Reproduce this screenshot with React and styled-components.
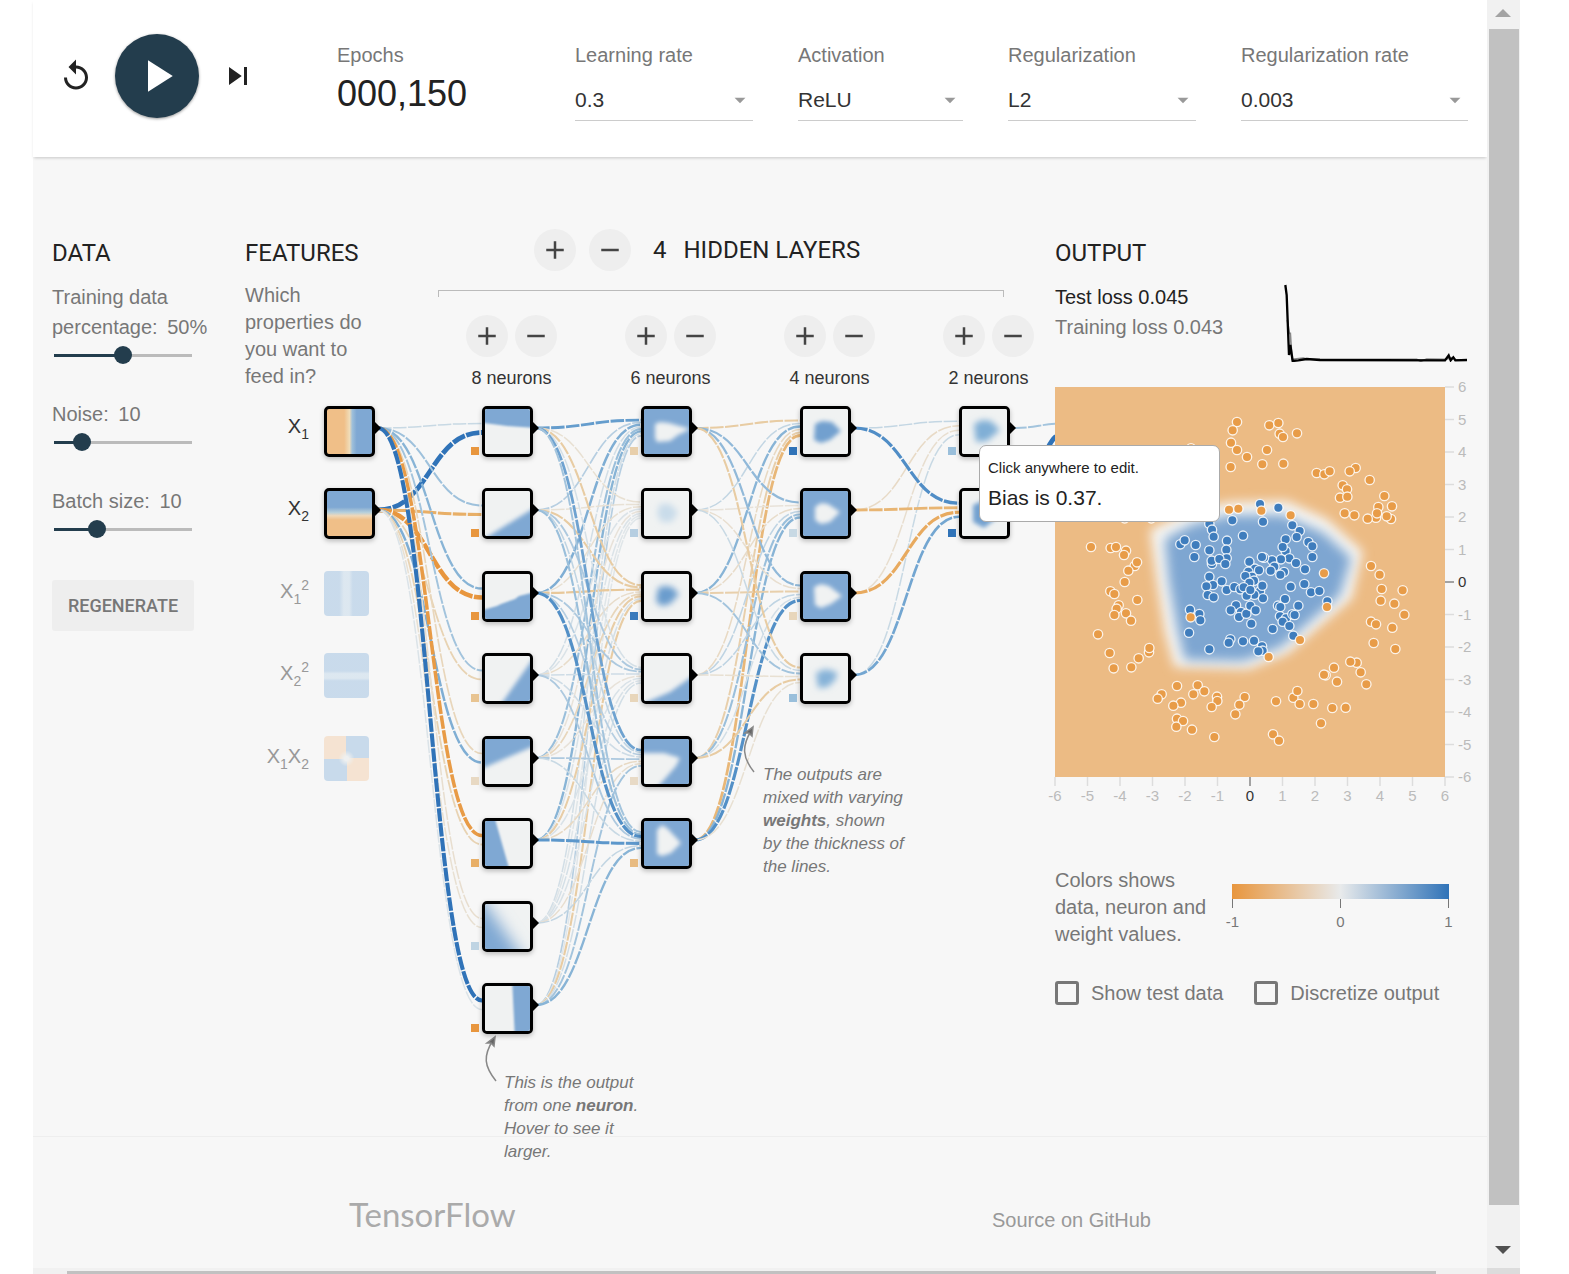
import React from "react";
import styled, { createGlobalStyle } from "styled-components";
import {
  MdReplay,
  MdPlayArrow,
  MdSkipNext,
  MdAdd,
  MdRemove,
  MdArrowDropDown,
} from "react-icons/md";

const TILE_BLUE = "#7fa8d3";
const TILE_ORANGE = "#f0bf88";
const TILE_WHITE = "#f0f2f2";

/* Stops of the weight colour scale, at |w| = 0, 0.4, 0.75 and 1. */
const STOPS = [0, 0.4, 0.75, 1];
const BLUES = [[228, 232, 234], [154, 191, 219], [92, 151, 203], [48, 115, 184]];
const ORANGES = [[232, 230, 226], [232, 204, 163], [232, 175, 103], [232, 150, 62]];

/* Colour of a weight or bias on the orange - grey - blue scale. */
const weightColor = (w) => {
  const t = Math.min(1, Math.abs(w));
  const ramp = w < 0 ? ORANGES : BLUES;
  const i = t > 0.75 ? 2 : t > 0.4 ? 1 : 0;
  const f = (t - STOPS[i]) / (STOPS[i + 1] - STOPS[i]);
  const mix = ramp[i].map((c, k) => Math.round(c + (ramp[i + 1][k] - c) * f));
  return `rgb(${mix.join(",")})`;
};

const GlobalStyle = createGlobalStyle`
  * { box-sizing: border-box; }
  body {
    margin: 0;
    background: #fff;
    color: #222;
    font-family: "Liberation Sans", Arial, sans-serif;
    font-size: 20px;
  }
  h2, p { margin: 0; }
  button, select, input { font: inherit; }
`;

const Frame = styled.div`
  display: grid;
  grid-template-columns: 1fr 33px;
  grid-template-rows: 1fr 6px;
  min-height: 100vh;
  margin: 0 49px 0 33px;
`;

const Page = styled.div`
  display: flex;
  flex-direction: column;
  min-width: 0;
  background: #f7f7f7;
`;

/* ---------- top controls ---------- */

const Header = styled.header`
  display: flex;
  align-items: flex-start;
  gap: 81px;
  padding: 34px 19px 36px 25px;
  background: #fff;
  box-shadow: 0 2px 3px -1px rgba(0, 0, 0, 0.2);
`;

const Player = styled.div`
  display: flex;
  align-items: center;
  gap: 21px;
`;

const IconButton = styled.button`
  display: flex;
  padding: 0;
  border: 0;
  background: none;
  color: #222;
  font-size: 36px;
`;

const PlayButton = styled(IconButton)`
  align-items: center;
  justify-content: center;
  width: 84px;
  height: 84px;
  border-radius: 50%;
  background: #233d4d;
  color: #fff;
  font-size: 54px;
  box-shadow: 0 1px 3px rgba(0, 0, 0, 0.4);
`;

const Settings = styled.div`
  flex: 1;
  display: grid;
  grid-template-columns: 193fr 178fr 165fr 188fr 227fr;
  gap: 45px;
  padding-top: 9px;
`;

const Setting = styled.div`
  display: flex;
  flex-direction: column;
  min-width: 0;
  color: #777;
  line-height: 24px;
`;

const EpochCount = styled.output`
  margin-top: 9px;
  color: #222;
  font-size: 36px;
  line-height: 36px;
`;

const SelectBox = styled.div`
  display: grid;
  align-items: center;
  margin-top: 13px;
  border-bottom: 1px solid #ccc;
  color: #999;

  > * { grid-area: 1 / 1; }
  > svg { justify-self: end; pointer-events: none; font-size: 26px; }
`;

const Select = styled.select`
  appearance: none;
  height: 40px;
  padding: 0;
  border: 0;
  background: none;
  color: #333;
  font-size: 21px;
`;

/* ---------- main columns ---------- */

const Main = styled.main`
  flex: 1;
  display: flex;
  justify-content: space-between;
  padding: 72px 15px 80px 19px;
`;

const Heading = styled.h2`
  color: #222;
  font: 400 24px/28px Roboto, sans-serif;
`;

const DataColumn = styled.section`
  width: 173px;
  padding-top: 10px;
`;

const SliderField = styled.div`
  margin-top: ${(p) => (p.$first ? 15 : 35)}px;

  label {
    display: block;
    color: #777;
    line-height: 30px;
  }
  output { margin-left: 4px; }
`;

const Slider = styled.input`
  appearance: none;
  display: block;
  width: 156px;
  height: 18px;
  margin: 4px 0 0 -7px;
  background:
    linear-gradient(#233d4d, #233d4d) 9px center / var(--filled) 3px no-repeat,
    linear-gradient(#bbb, #bbb) 9px center / calc(100% - 18px) 3px no-repeat;

  &::-webkit-slider-thumb {
    appearance: none;
    width: 18px;
    height: 18px;
    border-radius: 50%;
    background: #233d4d;
  }
`;

const Regenerate = styled.button`
  width: 142px;
  height: 51px;
  margin-top: 42px;
  padding: 0;
  border: 0;
  border-radius: 3px;
  background: #eee;
  color: #777;
  font: 500 18px/24px Roboto, sans-serif;
`;

const NetworkColumn = styled.section`
  width: 790px;
`;

const NetworkTop = styled.div`
  display: grid;
  grid-template-columns: 193px 1fr;
  margin-bottom: 16px;
`;

const Features = styled.div`
  padding-top: 10px;
`;

const FeaturesText = styled.p`
  width: 130px;
  margin-top: 15px;
  color: #777;
  line-height: 27px;
`;

const LayersTitle = styled.div`
  display: flex;
  align-items: center;
  gap: 13px;
  padding-left: 96px;

  h2 { margin-left: 9px; }
  h2 + h2 { margin-left: 4px; }
`;

const RoundButton = styled.button`
  display: flex;
  align-items: center;
  justify-content: center;
  width: 42px;
  height: 42px;
  padding: 0;
  border: 0;
  border-radius: 50%;
  background: #eee;
  color: #444;
  font-size: 30px;
`;

const Bracket = styled.div`
  width: 566px;
  height: 7px;
  margin-top: 19px;
  border: 1px solid #bbb;
  border-bottom: 0;
`;

const LayerRow = styled.div`
  display: flex;
  gap: 68px;
  margin: 18px 0 0 28px;
`;

const LayerControls = styled.div`
  display: grid;
  grid-template-columns: 42px 42px;
  gap: 10px 7px;
  color: #333;
  font-size: 18px;
  line-height: 22px;
  text-align: center;
  white-space: nowrap;

  span { grid-column: 1 / 3; }
`;

/* ---------- network diagram ---------- */

const Canvas = styled.div`
  position: relative;
  height: 640px;
`;

const Links = styled.svg`
  position: absolute;
  top: -20px;
  left: 0;
`;

const Tile = styled.div`
  position: absolute;
  width: ${(p) => (p.$off ? 45 : 51)}px;
  height: ${(p) => (p.$off ? 45 : 51)}px;
  border: ${(p) => (p.$off ? "0" : "3px solid #000")};
  border-radius: ${(p) => (p.$off ? 4 : 5)}px;
  overflow: hidden;
  opacity: ${(p) => (p.$off ? 0.4 : 1)};
  background: ${TILE_WHITE};
  box-shadow: ${(p) => (p.$off ? "none" : "0 2px 5px rgba(0, 0, 0, 0.25)")};

  svg { display: block; }
`;

const FeatureName = styled.div`
  position: absolute;
  left: 0;
  width: 64px;
  height: 45px;
  color: ${(p) => (p.$off ? "#999" : "#333")};
  font-size: 20px;
  line-height: 40px;
  text-align: right;
  white-space: nowrap;

  sub, sup { font-size: 14px; line-height: 0; }
  sub { vertical-align: -6px; }
  sup { vertical-align: 8px; }
`;

const Bias = styled.div`
  position: absolute;
  width: 8px;
  height: 8px;
`;

const Callout = styled.p`
  position: absolute;
  width: 142px;
  color: #777;
  font-size: 17px;
  font-style: italic;
  line-height: 23px;
`;

const Tooltip = styled.div`
  position: absolute;
  z-index: 2;
  top: 39px;
  left: 734px;
  width: 241px;
  height: 77px;
  padding: 10px 8px;
  border: 1px solid #aaa;
  border-radius: 7px;
  background: #fff;
  font-size: 15px;
  line-height: 24px;

  strong {
    display: block;
    font-size: 21px;
    font-weight: 400;
    line-height: 36px;
  }
`;

/* ---------- output ---------- */

const OutputColumn = styled.section`
  width: 417px;
  padding-top: 10px;
`;

const LossRow = styled.div`
  display: flex;
  justify-content: space-between;
  margin: 15px 5px 25px 0;
  line-height: 30px;
`;

const TrainLoss = styled.div`
  color: #777;
`;

const Plot = styled.svg`
  display: block;
  overflow: visible;
  font-size: 15px;
`;

const Legend = styled.div`
  display: flex;
  justify-content: space-between;
  margin-top: 60px;
  padding-right: 19px;
  color: #777;

  p { width: 155px; line-height: 27px; }
`;

const Scale = styled.div`
  width: 225px;
  padding: 17px 0 0 0;
`;

const ScaleBar = styled.div`
  height: 15px;
  margin: 0 4px;
  background: linear-gradient(90deg, #e8963e, #e8eaeb, #3073b8);
`;

const ScaleTicks = styled.div`
  display: flex;
  justify-content: space-between;
  font-size: 15px;
  line-height: 27px;

  span { width: 9px; display: flex; flex-direction: column; align-items: center; }
  span::before { content: ""; width: 1px; height: 9px; background: #777; }
`;

const Checks = styled.div`
  display: flex;
  gap: 31px;
  margin-top: 33px;
`;

const Check = styled.label`
  display: flex;
  align-items: center;
  gap: 12px;
  color: #777;
  line-height: 24px;
  white-space: nowrap;

  input {
    appearance: none;
    width: 24px;
    height: 24px;
    margin: 0;
    border: 3px solid #777;
    border-radius: 3px;
  }
`;

const Footer = styled.footer`
  display: flex;
  align-items: baseline;
  justify-content: space-between;
  height: 132px;
  padding: 59px 336px 0 316px;
  border-top: 1px solid #eee;

  a { color: #999; text-decoration: none; }
`;

const Brand = styled.a`
  font: 400 33px/36px Lato, sans-serif;
  && { color: #aaa; }
`;

/* ---------- scroll bars ---------- */

const VBar = styled.div`
  display: flex;
  flex-direction: column;
  align-items: center;
  background: #f1f1f1;

  div { flex: 1; width: 30px; background: #c1c1c1; }
  svg { flex: none; }
`;

const HBar = styled.div`
  padding: 3px 51px 0 34px;
  background: #f1f1f1;

  div { height: 3px; background: #c1c1c1; }
`;

const Corner = styled.div`
  background: #dcdcdc;
`;

/* ---------- diagram data ---------- */

const COLS = [79, 237, 396, 555, 714];
const rowTop = (r) => Math.floor(r * 82.5);

/* weights[layer][destination][source] */
const WEIGHTS = [
  [
    [0.15, 1.4], [0.38, -0.75], [0.5, -1.3], [0.35, -0.3],
    [-0.25, 0.55], [-0.95, -0.3], [-0.12, -0.1], [1.15, 0.05],
  ],
  [
    [0.7, 0.25, 0.55, 0.1, 0.4, 0.5, 0.1, 0.25],
    [-0.1, -0.08, -0.1, 0.05, -0.06, 0.05, 0.02, 0.02],
    [-0.4, -0.4, -0.45, -0.15, -0.25, -0.38, 0.08, -0.4],
    [0.08, 0.3, 0.3, 0.12, -0.06, 0.06, 0.06, 0.1],
    [0.65, 0.2, 0.25, 0.12, 0.3, -0.2, -0.12, 0.35],
    [0.35, 0.4, 0.8, 0.3, 0.15, 0.75, 0.18, 0.5],
  ],
  [
    [-0.4, 0.18, 0.5, -0.2, -0.35, -0.65],
    [0.45, -0.06, -0.15, 0.2, 0.4, 0.5],
    [0.45, -0.12, -0.35, 0.2, 0.1, 0.8],
    [-0.4, 0.15, 0.35, -0.1, -0.4, -0.1],
  ],
  [
    [0.18, -0.18, -0.12, 0.15],
    [0.82, -0.68, -0.8, 0.62],
  ],
  [[0.35, 1.4]],
];

const BIASES = [
  [-1, -1, -1, -0.5, -0.2, -0.75, 0.2, -1],
  [-0.35, 0.25, 0.95, -0.25, -0.18, -0.6],
  [1, 0.15, -0.25, 0.4],
  [0.4, 1],
];

const LAYER_SIZES = [8, 6, 4, 2];

/* Each neuron: background, shape colour, outline of the shape, blur. */
const W = TILE_WHITE;
const B = TILE_BLUE;
const TILES = [
  [
    [W, B, "-9,-9 54,-9 54,19 22,17 -9,13", 1],
    [W, B, "-4,50 10,41 54,14 54,54 -4,54", 2],
    [W, B, "-9,38 12,32 16,30 30,25 34,22 54,17 54,54 -9,54", 1],
    [W, B, "12,54 54,-6 54,54", 2],
    [W, B, "-9,-9 54,-9 54,5 -9,32", 2],
    [W, B, "-9,-9 8,-9 26,54 -9,54", 1],
    [W, B, "-19,-14 -6,-9 42,60 -19,64", 8],
    [W, B, "27,-9 54,-9 54,54 30,54", 1],
  ],
  [
    [B, W, "11,15 16,13 25,14 46,20 34,26 26,32 13,33 11,29", 2],
    [W, "#c9dcea", "16,13 26,13 34,21 28,31 17,31 13,22", 3],
    [W, "#6b9ccd", "14,14 20,12 28,13 35,20 26,30 17,32 12,27", 3],
    [W, B, "-2,48 26,36 54,16 54,54 -4,54", 2],
    [B, W, "-9,14 20,14 36,19 32,27 12,50 -9,54", 2],
    [B, W, "13,9 18,4 24,8 37,22 27,32 18,35 13,33", 2],
  ],
  [
    [W, "#72a0cf", "12,15 19,12 29,13 38,22 27,31 18,34 11,31", 2],
    [B, W, "12,16 18,12 25,13 37,21 27,31 18,33 12,29", 2],
    [B, W, "11,13 18,10 26,12 39,22 28,30 18,34 12,31", 2],
    [W, "#86b2d8", "13,17 22,13 34,16 33,23 25,31 15,32", 3],
  ],
  [
    [W, "#80afd6", "12,15 20,11 29,12 38,21 25,32 14,33", 3],
    [W, "#72a0cf", "11,14 20,10 32,13 36,26 22,37 11,31", 2],
  ],
];

const NeuronTile = ({ shape: [bg, fill, points, blur], id }) => (
  <svg width="45" height="45" viewBox="0 0 45 45">
    <filter id={id} x="-50%" y="-50%" width="200%" height="200%">
      <feGaussianBlur stdDeviation={blur} />
    </filter>
    <rect width="45" height="45" fill={bg} />
    <polygon points={points} fill={fill} filter={`url(#${id})`} />
  </svg>
);

const FEATURES = [
  {
    name: <>X<sub>1</sub></>,
    bg: `linear-gradient(90deg, ${TILE_ORANGE} 38%, #f0dcb8 50%, #9fc0da 56%, ${TILE_BLUE} 66%)`,
  },
  {
    name: <>X<sub>2</sub></>,
    bg: `linear-gradient(180deg, ${TILE_BLUE} 36%, #b9d0da 48%, #f0d8b8 55%, ${TILE_ORANGE} 64%)`,
  },
  {
    off: true,
    name: <>X<sub>1</sub><sup>2</sup></>,
    bg: "linear-gradient(90deg, #84b0da 34%, #b5d0e6 44%, #b5d0e6 56%, #84b0da 64%)",
  },
  {
    off: true,
    name: <>X<sub>2</sub><sup>2</sup></>,
    bg: "linear-gradient(180deg, #84b0da 40%, #b5d0e6 46%, #b5d0e6 56%, #84b0da 62%)",
  },
  {
    off: true,
    name: <>X<sub>1</sub>X<sub>2</sub></>,
    bg: `radial-gradient(circle, #e4e8e6 2px, transparent 8px),
      conic-gradient(#84b0da 25%, #f3c79c 0 50%, #84b0da 0 75%, #f3c79c 0)`,
  },
];

const linkPath = (x0, y0, x1, y1) => {
  const m = (x0 + x1) / 2;
  return `M${x0},${y0}C${m},${y0} ${m},${y1} ${x1},${y1}`;
};

const NetworkLinks = () => (
  <Links width="810" height="720" viewBox="0 -20 810 720" fill="none" aria-hidden="true">
    {WEIGHTS.map((layer, l) =>
      layer.map((row, dest) =>
        row.map((w, src) => {
          const n = row.length;
          const x1 = l === 4 ? 820 : COLS[l + 1];
          const y1 = rowTop(dest) + 22 + ((src - (n - 1) / 2) / n) * 18;
          return (
            <path
              key={`${l}-${dest}-${src}`}
              d={linkPath(COLS[l] + 54, rowTop(src) + 22, x1, y1)}
              stroke={weightColor(w)}
              strokeWidth={Math.max(1.5, 1 + Math.abs(w) * 2.7)}
              strokeDasharray="13.5 1.5"
            />
          );
        })
      )
    )}
    {COLS.map((x, c) =>
      Array.from({ length: c === 0 ? 2 : LAYER_SIZES[c - 1] }, (_, r) => (
        <path key={`${c}-${r}`} d={`M${x + 50},${rowTop(r) + 15}l7,7l-7,7z`} fill="#000" />
      ))
    )}
    <g stroke="#888" strokeWidth="1.5">
      <path d="M251,675C239,660 238,650 248,634" />
      <path d="M509,366C497,351 497,340 506,325" />
      <path d="M250,631l-1,9l-3,-3l-4,0z" fill="#666" />
      <path d="M508,321l-1,9l-3,-3l-4,0z" fill="#666" />
    </g>
  </Links>
);

const Network = () => (
  <Canvas>
    <NetworkLinks />
    {FEATURES.map((f, r) => (
      <React.Fragment key={r}>
        <FeatureName $off={f.off} style={{ top: rowTop(r) }}>{f.name}</FeatureName>
        <Tile $off={f.off} style={{ left: COLS[0], top: rowTop(r), background: f.bg }} />
      </React.Fragment>
    ))}
    {TILES.map((layer, l) =>
      layer.map((shape, r) => (
        <React.Fragment key={`${l}-${r}`}>
          <Tile style={{ left: COLS[l + 1], top: rowTop(r) }}>
            <NeuronTile shape={shape} id={`soft-${l}-${r}`} />
          </Tile>
          <Bias
            style={{
              left: COLS[l + 1] - 11,
              top: rowTop(r) + 41,
              background: weightColor(BIASES[l][r]),
            }}
          />
        </React.Fragment>
      ))
    )}
    <Callout style={{ left: 518, top: 357 }}>
      The outputs are mixed with varying <b>weights</b>, shown<br />
      by the thickness of the lines.
    </Callout>
    <Callout style={{ left: 259, top: 665 }}>
      This is the output from one <b>neuron</b>. Hover to see it larger.
    </Callout>
    <Tooltip role="tooltip">
      Click anywhere to edit.
      <strong>Bias is 0.37.</strong>
    </Tooltip>
  </Canvas>
);

/* ---------- output plot data: 97.5 units per axis unit, origin (630, 305) ---------- */

const ORANGE_DOTS = `591,-174 578,-149 573,-112 591,-90 621,-69 572,-39 688,-164 715,-171 719,-139
729,-129 771,-140 681,-90 667,-47 730,-49 830,-21 853,-17 869,-26 947,-36 929,-26 989,0 453,-95
908,16 921,28 900,53 922,50 1033,48 1015,81 1056,79 914,100 943,106 1008,113 983,116 1053,117
1011,100 1040,109 567,89 595,86 664,92 752,106 254,115 334,115
153,201 212,204 228,201 258,212 252,225 284,258 291,247 265,272 254,306 211,334 223,342 292,360
236,376 230,386 258,400 223,405 273,422 174,463 209,519 221,565 274,562 296,535 327,517 328,504
411,618 473,616 493,634 460,643 365,643 353,656 423,668 400,677 411,716 429,723 409,740 456,749
523,771 531,650 532,663 515,681 614,651 598,674 586,703 708,664 699,763 717,782 760,653 772,633
779,672 820,672 877,684 917,683 843,730 857,586 852,584 882,563 891,605 950,548 931,545 962,577
979,613 993,258 1019,284 1025,327 1088,331 1022,362 1063,371 1093,404 993,425 1008,433 1057,443
1001,489 1066,507 852,280 861,381 452,412 780,480 686,531`;

const BLUE_DOTS = `660,72 715,83 577,121 669,125 757,136 779,153 508,131 516,149 521,170 609,167
421,193 434,181 467,195 463,231 508,211 561,182 559,209 560,235 516,252 515,242 538,237 556,252
737,178 770,171 805,186 817,199 817,231 737,213 728,201 748,235 723,238 696,241 672,233 666,231
628,245 768,249 795,268 703,260 692,272 732,276 721,284 645,266 657,271 625,275 636,290 616,288
642,302 628,308 508,290 545,304 519,315 499,319 503,345 521,352 560,330 583,321 601,328 611,322
660,334 667,317 669,355 643,344 620,347 631,330 752,320 793,312 813,337 838,333 862,364 735,357
775,377 714,377 721,381 588,376 572,391 603,396 597,411 619,401 631,377 647,391 634,431 720,409
738,415 728,425 748,438 757,403 764,405 698,447 760,467 450,389 478,402 481,421 447,458 508,508
571,478 566,488 609,484 642,482 666,499 668,512 655,514`;

const parseDots = (s) => s.trim().split(/\s+/).map((p) => p.split(","));

const TICKS = Array.from({ length: 13 }, (_, i) => i - 6);

const OutputPlot = () => (
  <Plot width="417" height="420" role="img" aria-label="Output of the network">
    <svg width="390" height="390" viewBox="45 -279 1170 1170">
      <filter id="halo" x="-20%" y="-20%" width="140%" height="140%">
        <feGaussianBlur stdDeviation="16" />
      </filter>
      <filter id="core" x="-20%" y="-20%" width="140%" height="140%">
        <feGaussianBlur stdDeviation="18" />
      </filter>
      <rect x="45" y="-279" width="1170" height="1170" fill="#ecbb84" />
      <polygon
        points="330,150 450,92 570,66 740,62 860,116 968,214 935,356 745,520 625,568 403,562 374,455 350,300"
        fill="#f6f6f4"
        filter="url(#halo)"
      />
      <polygon
        points="374,176 458,132 570,106 728,104 850,158 934,234 900,346 722,502 610,544 434,540 412,450 386,300"
        fill="#7ea6d1"
        filter="url(#core)"
      />
      <g stroke="#fff" strokeWidth="4" strokeOpacity="0.85">
        {parseDots(BLUE_DOTS).map(([x, y], i) => (
          <circle key={i} cx={x} cy={y} r="14" fill="#3f7dbd" />
        ))}
        {parseDots(ORANGE_DOTS).map(([x, y], i) => (
          <circle key={i} cx={x} cy={y} r="14" fill="#e89c48" />
        ))}
      </g>
    </svg>
    {TICKS.map((t) => {
      const p = 195 + t * 32.5;
      const line = t === 0 ? "#888" : "#ddd";
      const text = t === 0 ? "#333" : "#bbb";
      return (
        <g key={t}>
          <path d={`M${p},390v9M390,${390 - p}h9`} stroke={line} strokeWidth="1.5" />
          <text x={p} y="414" textAnchor="middle" fill={text}>{t}</text>
          <text x="403" y={395 - p} fill={text}>{t}</text>
        </g>
      );
    })}
  </Plot>
);

const LossChart = () => (
  <svg width="183" height="80" viewBox="732 186 549 240" fill="none" aria-hidden="true">
    <path d="M742,300L748,340L751,340L756,418L790,414L800,417L1130,418L1142,424L1160,417L1215,418L1240,412L1246,419L1281,420" stroke="#888" strokeWidth="5" />
    <path d="M736,195L740,225L747,405L751,375L758,423L775,421L800,417L840,420L1215,421L1226,406L1232,421L1240,412L1246,421L1281,420" stroke="#000" strokeWidth="7" />
  </svg>
);

const SELECTS = [
  { id: "learning-rate", label: "Learning rate", options: ["0.3", "0.1", "0.03"] },
  { id: "activation", label: "Activation", options: ["ReLU", "Tanh", "Sigmoid", "Linear"] },
  { id: "regularization", label: "Regularization", options: ["L2", "L1", "None"] },
  { id: "reg-rate", label: "Regularization rate", options: ["0.003", "0.01", "0"] },
];

const SLIDERS = [
  { id: "split", label: "Training data percentage:", value: 50, min: 10, max: 90, unit: "%" },
  { id: "noise", label: "Noise:", value: 10, min: 0, max: 50, unit: "" },
  { id: "batch", label: "Batch size:", value: 10, min: 1, max: 30, unit: "" },
];

export default function App() {
  return (
    <>
      <GlobalStyle />
      <Frame>
        <Page>
          <Header>
            <Player>
              <IconButton aria-label="Reset"><MdReplay /></IconButton>
              <PlayButton aria-label="Run"><MdPlayArrow /></PlayButton>
              <IconButton aria-label="Step"><MdSkipNext /></IconButton>
            </Player>
            <Settings>
              <Setting>
                <span>Epochs</span>
                <EpochCount>000,150</EpochCount>
              </Setting>
              {SELECTS.map((s) => (
                <Setting key={s.id}>
                  <label htmlFor={s.id}>{s.label}</label>
                  <SelectBox>
                    <Select id={s.id}>
                      {s.options.map((o) => <option key={o}>{o}</option>)}
                    </Select>
                    <MdArrowDropDown />
                  </SelectBox>
                </Setting>
              ))}
            </Settings>
          </Header>

          <Main>
            <DataColumn>
              <Heading>DATA</Heading>
              {SLIDERS.map((s, i) => (
                <SliderField key={s.id} $first={i === 0}>
                  <label htmlFor={s.id}>
                    {s.label} <output>{s.value}{s.unit}</output>
                  </label>
                  <Slider
                    id={s.id}
                    type="range"
                    min={s.min}
                    max={s.max}
                    defaultValue={s.value}
                    style={{
                      "--filled": `calc((100% - 18px) * ${(s.value - s.min) / (s.max - s.min)})`,
                    }}
                  />
                </SliderField>
              ))}
              <Regenerate>REGENERATE</Regenerate>
            </DataColumn>

            <NetworkColumn>
              <NetworkTop>
                <Features>
                  <Heading>FEATURES</Heading>
                  <FeaturesText>Which properties do you want to feed in?</FeaturesText>
                </Features>
                <div>
                  <LayersTitle>
                    <RoundButton aria-label="Add layer"><MdAdd /></RoundButton>
                    <RoundButton aria-label="Remove layer"><MdRemove /></RoundButton>
                    <Heading>4</Heading>
                    <Heading>HIDDEN LAYERS</Heading>
                  </LayersTitle>
                  <Bracket />
                  <LayerRow>
                    {LAYER_SIZES.map((n) => (
                      <LayerControls key={n}>
                        <RoundButton aria-label="Add neuron"><MdAdd /></RoundButton>
                        <RoundButton aria-label="Remove neuron"><MdRemove /></RoundButton>
                        <span>{n} neurons</span>
                      </LayerControls>
                    ))}
                  </LayerRow>
                </div>
              </NetworkTop>
              <Network />
            </NetworkColumn>

            <OutputColumn>
              <Heading>OUTPUT</Heading>
              <LossRow>
                <div>
                  <div>Test loss 0.045</div>
                  <TrainLoss>Training loss 0.043</TrainLoss>
                </div>
                <LossChart />
              </LossRow>
              <OutputPlot />
              <Legend>
                <p>Colors shows data, neuron and weight values.</p>
                <Scale>
                  <ScaleBar />
                  <ScaleTicks><span>-1</span><span>0</span><span>1</span></ScaleTicks>
                </Scale>
              </Legend>
              <Checks>
                <Check><input type="checkbox" />Show test data</Check>
                <Check><input type="checkbox" />Discretize output</Check>
              </Checks>
            </OutputColumn>
          </Main>

          <Footer>
            <Brand href="#tensorflow">TensorFlow</Brand>
            <a href="#source">Source on GitHub</a>
          </Footer>
        </Page>
        <VBar aria-hidden="true">
          <svg width="33" height="29"><path d="M8,17l8,-8l8,8z" fill="#a3a3a3" /></svg>
          <div />
          <svg width="33" height="63"><path d="M8,41h16l-8,8z" fill="#505050" /></svg>
        </VBar>
        <HBar aria-hidden="true"><div /></HBar>
        <Corner />
      </Frame>
    </>
  );
}
